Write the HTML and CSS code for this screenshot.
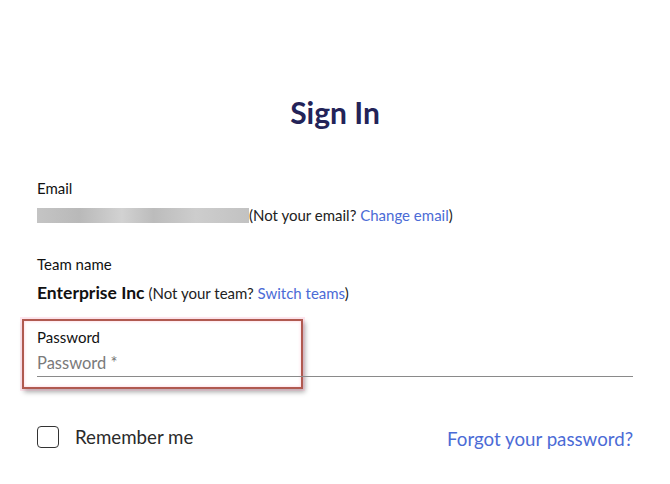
FILE: index.html
```html
<!DOCTYPE html>
<html>
<head>
<meta charset="utf-8">
<link rel="stylesheet" href="styles.css">
</head>
<body>
<main class="page">
  <h1 class="title">Sign In</h1>
  <section class="field email-field">
    <div class="label">Email</div>
    <div class="value-row">
      <span class="blurred"></span><span class="note">(Not your email? <a class="link">Change email</a>)</span>
    </div>
  </section>
  <section class="field team-field">
    <div class="label">Team name</div>
    <div class="value-row">
      <span class="team">Enterprise Inc</span> <span class="note">(Not your team? <a class="link">Switch teams</a>)</span>
    </div>
  </section>
  <section class="password-wrap">
    <div class="highlight">
      <div class="label">Password</div>
      <div class="placeholder">Password *</div>
    </div>
    <div class="underline"></div>
  </section>
  <div class="bottom-row">
    <label class="remember"><span class="checkbox"></span><span>Remember me</span></label>
    <a class="link forgot">Forgot your password?</a>
  </div>
</main>
</body>
</html>
```
FILE: styles.css
```css
* { box-sizing: border-box; }
html, body { margin: 0; padding: 0; background: #fff; }
body { font-family: Lato, "Open Sans", sans-serif; color: #1a1a1a; width: 670px; height: 484px; overflow: hidden; }
.page { padding: 90px 37px 0 37px; width: 670px; }
.title { margin: 0; text-align: center; font-size: 30px; font-weight: 700; color: #232358; line-height: 44px; }
.field { display: flex; flex-direction: column; }
.email-field { margin-top: 45px; }
.label { font-size: 15px; line-height: 18px; color: #111; }
.value-row { display: flex; align-items: center; margin-top: 9px; white-space: nowrap; }
.blurred { display: inline-block; width: 212px; height: 15px; background: linear-gradient(90deg, #c4c4c4 0%, #b9b9b9 20%, #d2d2d2 40%, #bcbcbc 55%, #cdcdcd 75%, #c2c2c2 100%); filter: blur(0.6px); }
.note { font-size: 15px; color: #222; }
.link { color: #4b6bd6; text-decoration: none; }
.team-field { margin-top: 31px; }
.team-field .value-row { margin-top: 9px; align-items: baseline; }
.team { font-size: 17.5px; font-weight: 700; color: #111; margin-right: 4px; }
.password-wrap { margin-top: 16px; position: relative; }
.highlight { margin-left: -15px; width: 281px; height: 70px; border: 2px solid #b05a50; box-shadow: 0 0 0 2px rgba(255,160,190,0.25), inset 0 0 3px rgba(255,150,180,0.5), 2px 3px 5px rgba(0,0,0,0.35); padding: 7px 0 0 13px; }
.placeholder { margin-top: 7px; font-size: 16.5px; color: #7a7a7a; }
.underline { position: absolute; left: 0; right: 0; top: 57px; height: 1px; background: #8a8a8a; }
.bottom-row { display: flex; justify-content: space-between; align-items: center; margin-top: 34px; }
.remember { display: flex; align-items: center; font-size: 18.7px; color: #2a2a2a; }
.checkbox { width: 22px; height: 22px; border: 1.5px solid #333; border-radius: 4px; margin-right: 16px; }
.forgot { font-size: 18.7px; margin-top: 5px; }
```
